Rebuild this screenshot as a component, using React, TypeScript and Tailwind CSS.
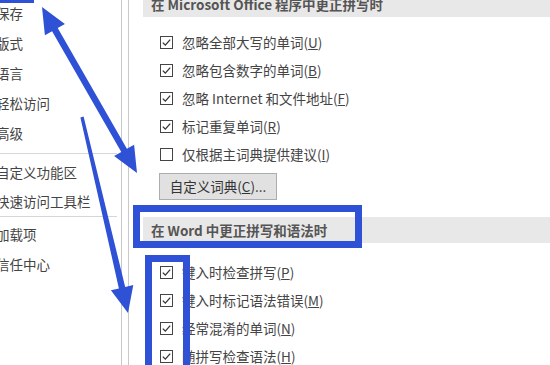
import type { ReactNode } from "react";

const font = { fontFamily: '"Noto Sans CJK SC", "Noto Sans", sans-serif' };
const BLUE = "#2e51d5";

function arrow(x1: number, y1: number, x2: number, y2: number, both: boolean) {
  const dx = x2 - x1;
  const dy = y2 - y1;
  const len = Math.hypot(dx, dy);
  const ux = dx / len;
  const uy = dy / len;
  const nx = -uy;
  const ny = ux;
  const hl = 26;
  const hw = 11.5;
  const sw = 3.2;
  const p = (x: number, y: number) => `${x.toFixed(1)},${y.toFixed(1)}`;
  const sx = both ? x1 + ux * hl : x1;
  const sy = both ? y1 + uy * hl : y1;
  const ex = x2 - ux * hl;
  const ey = y2 - uy * hl;
  const pts: string[] = [];
  if (both) {
    pts.push(p(x1, y1), p(sx - nx * hw, sy - ny * hw), p(sx - nx * sw, sy - ny * sw));
  } else {
    pts.push(p(sx - nx * sw * 0.5, sy - ny * sw * 0.5));
  }
  pts.push(p(ex - nx * sw, ey - ny * sw), p(ex - nx * hw, ey - ny * hw), p(x2, y2));
  pts.push(p(ex + nx * hw, ey + ny * hw), p(ex + nx * sw, ey + ny * sw));
  if (both) {
    pts.push(p(sx + nx * sw, sy + ny * sw), p(sx + nx * hw, sy + ny * hw));
  } else {
    pts.push(p(sx + nx * sw * 0.5, sy + ny * sw * 0.5));
  }
  return pts.join(" ");
}

function MenuItem({ children, h = "h-[30px]" }: { children: ReactNode; h?: string }) {
  return (
    <div className={`${h} flex items-center ml-[-4px] text-[13.5px] text-[#444] whitespace-nowrap`}>
      {children}
    </div>
  );
}

function Checkbox({ checked }: { checked: boolean }) {
  return (
    <div className="w-[13px] h-[13px] border border-[#444] bg-white shrink-0 flex items-center justify-center">
      {checked && (
        <svg width="11" height="11" viewBox="0 0 11 11">
          <path d="M1.8 5.6 L4.3 8.1 L9.2 2.6" fill="none" stroke="#333" strokeWidth="1.3" />
        </svg>
      )}
    </div>
  );
}

function Option({ checked, label, k }: { checked: boolean; label: string; k: string }) {
  return (
    <div className="h-[28px] flex items-center pl-[31px] gap-[9px]">
      <Checkbox checked={checked} />
      <span className="text-[13.5px] text-[#444] whitespace-nowrap">
        {label}(<u>{k}</u>)
      </span>
    </div>
  );
}

function SectionHeader({ children }: { children: ReactNode }) {
  return (
    <div className="h-[26px] ml-[14px] bg-[#e8e8e8] flex items-center pl-[8px] text-[13.5px] font-bold text-[#555] whitespace-nowrap">
      {children}
    </div>
  );
}

export default function App() {
  return (
    <div className="w-[550px] h-[365px] relative overflow-hidden bg-white flex" style={font}>
      {/* Left navigation */}
      <div className="w-[122px] shrink-0 border-r border-[#c9c9c9] flex flex-col mt-[-2px]">
        <MenuItem>保存</MenuItem>
        <MenuItem>版式</MenuItem>
        <MenuItem>语言</MenuItem>
        <MenuItem>轻松访问</MenuItem>
        <MenuItem>高级</MenuItem>
        <div className="h-px bg-[#d6d6d6] mr-[4px] mt-[5px] mb-[4px]" />
        <MenuItem h="h-[29px]">自定义功能区</MenuItem>
        <MenuItem h="h-[29px]">快速访问工具栏</MenuItem>
        <div className="h-px bg-[#d6d6d6] mr-[4px] mb-[2px]" />
        <MenuItem>加载项</MenuItem>
        <MenuItem>信任中心</MenuItem>
      </div>
      <div className="w-[7px] shrink-0 border-r border-[#c9c9c9]" />

      {/* Options */}
      <div className="flex-1 flex flex-col">
        <div className="mt-[-9px]">
          <SectionHeader>在 Microsoft Office 程序中更正拼写时</SectionHeader>
        </div>
        <div className="mt-[11px]">
          <Option checked label="忽略全部大写的单词" k="U" />
          <Option checked label="忽略包含数字的单词" k="B" />
          <Option checked label="忽略 Internet 和文件地址" k="F" />
          <Option checked label="标记重复单词" k="R" />
          <Option checked={false} label="仅根据主词典提供建议" k="I" />
        </div>
        <div className="pl-[30px] mt-[5px]">
          <button className="w-[118px] h-[27px] bg-[#e1e1e1] border border-[#adadad] text-[13.5px] text-[#333] whitespace-nowrap">
            自定义词典(<u>C</u>)...
          </button>
        </div>
        <div className="mt-[17px]">
          <SectionHeader>在 Word 中更正拼写和语法时</SectionHeader>
        </div>
        <div className="mt-[15px]">
          <Option checked label="键入时检查拼写" k="P" />
          <Option checked label="键入时标记语法错误" k="M" />
          <Option checked label="经常混淆的单词" k="N" />
          <Option checked label="随拼写检查语法" k="H" />
        </div>
      </div>

      {/* Annotation overlay */}
      <svg className="absolute inset-0 pointer-events-none" width="550" height="365">
        <rect x="0" y="0" width="34" height="3" fill={BLUE} />
        <rect x="136.5" y="208.5" width="222" height="36" fill="none" stroke={BLUE} strokeWidth="7" />
        <rect x="148.5" y="258.5" width="38" height="130" fill="none" stroke={BLUE} strokeWidth="7" />
        <polygon points={arrow(42, 7, 137, 173, true)} fill={BLUE} />
        <polygon points={arrow(82, 117, 128, 313, false)} fill={BLUE} />
      </svg>
    </div>
  );
}
